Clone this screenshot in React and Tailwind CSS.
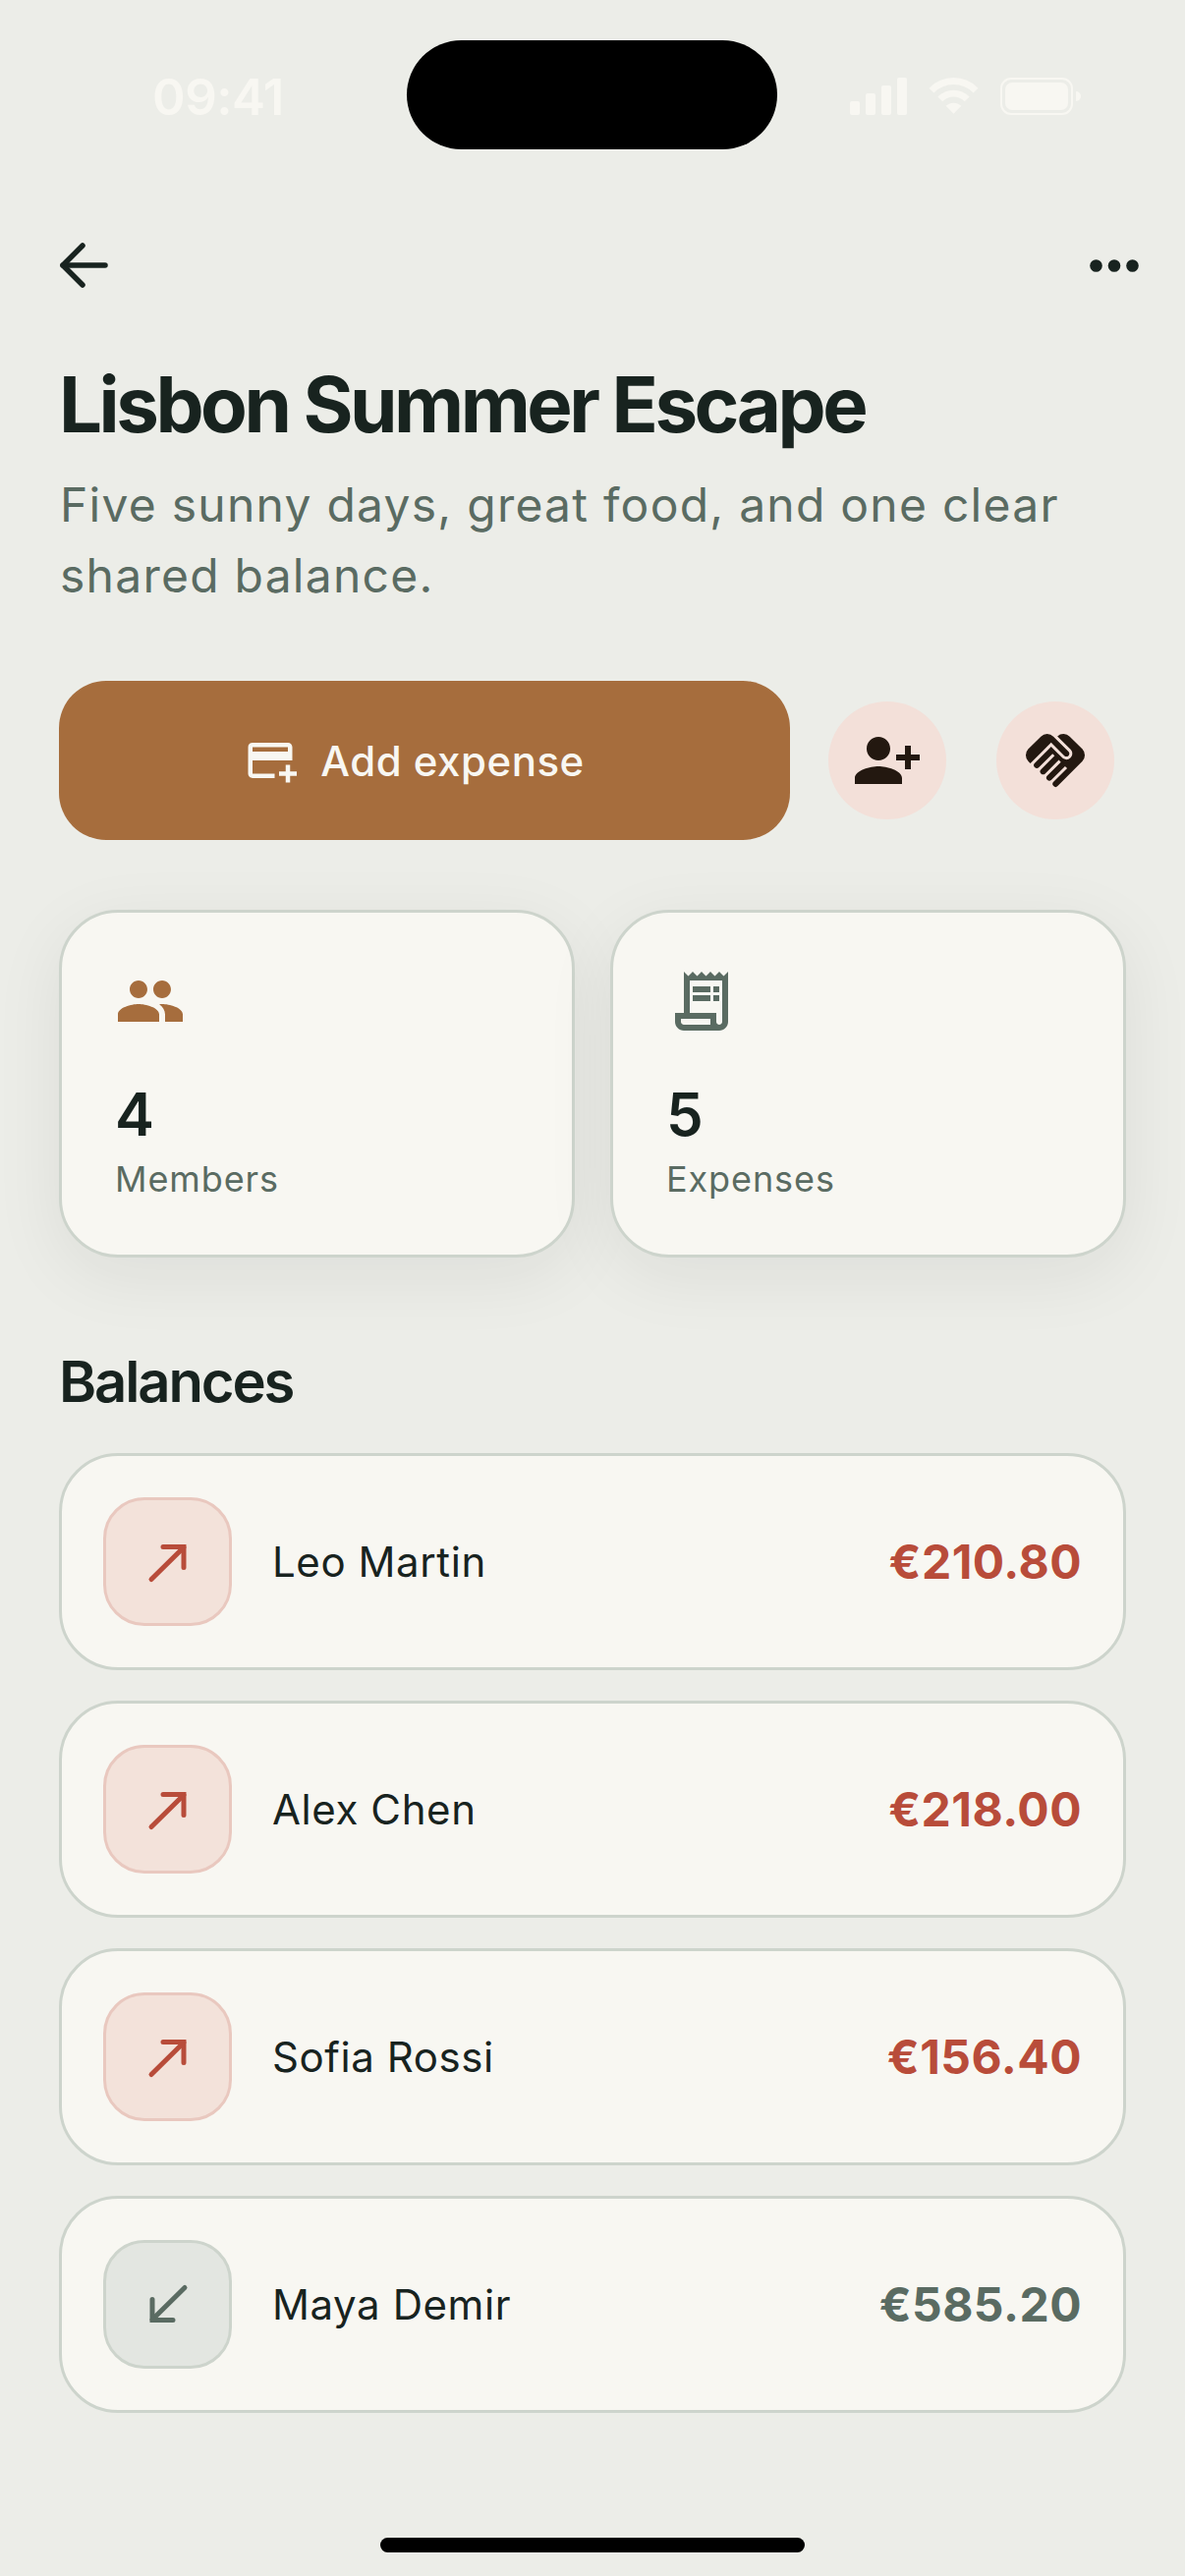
import React from "react";
import { MdGroup, MdPersonAdd, MdHandshake, MdOutlineAddCard, MdOutlineReceiptLong } from "react-icons/md";

const balances = [
  { name: "Leo Martin", amount: "€210.80", owes: true },
  { name: "Alex Chen", amount: "€218.00", owes: true },
  { name: "Sofia Rossi", amount: "€156.40", owes: true },
  { name: "Maya Demir", amount: "€585.20", owes: false },
];

const StatusBar = () => (
  <div className="h-[152px] pt-[41px] pl-[155px] pr-[106px] flex items-start">
    <span className="w-[259px] mt-[30px] text-[51px] leading-[56px] font-semibold tracking-[-0.01em] text-[#f8f7f2]">09:41</span>
    <div className="w-[377px] h-[111px] rounded-[56px] bg-black" />
    <div className="ml-auto mt-[38px] flex items-center gap-[22px]">
      {/* signal */}
      <svg width="58" height="38" viewBox="0 0 58 38" fill="#f8f7f2">
        <rect x="0" y="24" width="10" height="14" rx="2" />
        <rect x="16" y="16" width="10" height="22" rx="2" />
        <rect x="32" y="8" width="10" height="30" rx="2" />
        <rect x="48" y="0" width="10" height="38" rx="2" />
      </svg>
      {/* wifi */}
      <svg width="51" height="38" viewBox="0 0 52 38" fill="none" stroke="#f8f7f2" strokeWidth="7">
        <path d="M3 13 C16 0 36 0 49 13" />
        <path d="M12 22 C20 14 32 14 40 22" />
        <path d="M18 29 L26 37 L34 29 C29 25 23 25 18 29 Z" fill="#f8f7f2" stroke="none" />
      </svg>
      {/* battery */}
      <div className="flex items-center gap-[3px]">
        <div className="w-[74px] h-[38px] rounded-[11px] border-2 border-[#f8f7f2] p-[3px]">
          <div className="w-full h-full rounded-[7px] bg-[#f8f7f2]" />
        </div>
        <div className="w-[5px] h-[10px] rounded-r-full bg-[#f8f7f2]" />
      </div>
    </div>
  </div>
);

const Stat = ({ icon, value, label }) => (
  <div className="flex-1 h-[354px] rounded-[60px] border-[3px] border-[#cdd4cc] bg-[#f8f7f2] pl-[54px] pt-[60px] shadow-[0_18px_72px_rgba(24,35,31,0.07)]">
    <div className="h-[60px] flex items-center">{icon}</div>
    <div className="mt-[49px] text-[60px] leading-[72px] font-semibold text-[#18231f]">{value}</div>
    <div className="mt-[6px] text-[36px] leading-[48px] tracking-[0.025em] text-[#5a6b62]">{label}</div>
  </div>
);

const BalanceRow = ({ name, amount, owes }) => (
  <div className="h-[221px] rounded-[60px] border-[3px] border-[#cdd4cc] bg-[#f8f7f2] pl-[42px] pr-[42px] flex items-center">
    <div
      className={`w-[131px] h-[131px] rounded-[42px] border-[3px] flex items-center justify-center ${
        owes ? "bg-[#f3e2da] border-[#e9c8bf]" : "bg-[#e3e6e1] border-[#cdd4cc]"
      }`}
    >
      {owes ? (
        <svg width="54" height="54" viewBox="0 0 54 54" fill="none" stroke="#b84c3a" strokeWidth="5" strokeLinecap="round" strokeLinejoin="miter">
          <path d="M10 44.5 L43 12" />
          <path d="M22 11.5 H43 V32.5" />
        </svg>
      ) : (
        <svg width="54" height="54" viewBox="0 0 54 54" fill="none" stroke="#5a6b62" strokeWidth="5" strokeLinecap="round" strokeLinejoin="miter">
          <path d="M44 9.5 L11 42" />
          <path d="M32 42.5 H11 V21.5" />
        </svg>
      )}
    </div>
    <span className="ml-[41px] text-[42px] tracking-[0.014em] font-normal text-[#18231f]">{name}</span>
    <span className={`ml-auto text-[48px] font-bold tracking-[0.01em] ${owes ? "text-[#b84c3a]" : "text-[#5a6b62]"}`}>{amount}</span>
  </div>
);

export default function App() {
  return (
    <div className="w-[1206px] h-[2622px] bg-[#ecede8] relative overflow-hidden font-['Inter',sans-serif]">
      <StatusBar />

      {/* top nav */}
      <div className="mt-[88px] px-[60px] flex items-center justify-between h-[60px]">
        <svg width="50" height="46" viewBox="0 0 50 46" fill="none" stroke="#18231f" strokeWidth="5.5" strokeLinecap="round" strokeLinejoin="round">
          <path d="M47 23 H4" />
          <path d="M24 3 L4 23 L24 43" />
        </svg>
        <svg width="50" height="13" viewBox="0 0 50 13" fill="#18231f" className="mr-[-13px]">
          <circle cx="6.5" cy="6.5" r="6.3" />
          <circle cx="25" cy="6.5" r="6.3" />
          <circle cx="43.5" cy="6.5" r="6.3" />
        </svg>
      </div>

      <div className="px-[60px]">
        <h1 className="mt-[64px] text-[78px] leading-[96px] font-bold tracking-[-0.045em] text-[#18231f]">Lisbon Summer Escape</h1>
        <p className="mt-[18px] w-[1060px] pl-[1px] text-[48px] leading-[72px] tracking-[0.026em] text-[#5a6b62]">
          Five sunny days, great food, and one clear shared balance.
        </p>

        <div className="mt-[71px] flex items-center">
          <button className="w-[744px] h-[162px] pr-[21px] rounded-[48px] bg-[#a66d3d] flex items-center justify-center gap-[24px] text-[#f8f7f2] text-[42px] font-medium tracking-[0.012em]">
            <MdOutlineAddCard size={54} />
            Add expense
          </button>
          <button className="ml-[39px] w-[120px] h-[120px] rounded-full bg-[#f3e0d9] flex items-center justify-center text-[#231810]">
            <MdPersonAdd size={72} className="-scale-x-100" />
          </button>
          <button className="ml-[51px] w-[120px] h-[120px] rounded-full bg-[#f3e0d9] flex items-center justify-center text-[#231810]">
            <MdHandshake size={72} />
          </button>
        </div>

        <div className="mt-[71px] flex gap-[36px]">
          <Stat icon={<MdGroup size={72} className="text-[#a66d3d]" />} value="4" label="Members" />
          <Stat icon={<MdOutlineReceiptLong size={72} className="text-[#5a6b62]" />} value="5" label="Expenses" />
        </div>

        <h2 className="mt-[90px] text-[58px] leading-[72px] font-semibold tracking-[-0.037em] text-[#18231f]">Balances</h2>

        <div className="mt-[37px] flex flex-col gap-[31px]">
          {balances.map((b) => (
            <BalanceRow key={b.name} {...b} />
          ))}
        </div>
      </div>

      {/* home indicator */}
      <div className="absolute bottom-[24px] left-[387px] w-[432px] h-[15px] rounded-full bg-black" />
    </div>
  );
}
